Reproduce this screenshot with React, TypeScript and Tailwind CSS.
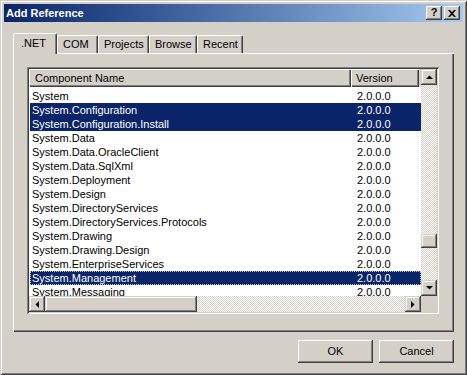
import React from "react";

const RAISED =
  "shadow-[inset_-1px_-1px_#404040,inset_1px_1px_#ffffff,inset_-2px_-2px_#808080,inset_2px_2px_#d4d0c8]";
const SCROLL_BTN =
  "shadow-[inset_-1px_-1px_#404040,inset_1px_1px_#d4d0c8,inset_-2px_-2px_#808080,inset_2px_2px_#ffffff]";
const HEADER_CELL =
  "shadow-[inset_1px_1px_#ffffff,inset_-1px_-1px_#404040,inset_-2px_-2px_#808080]";
const DITHER =
  "bg-[image:repeating-conic-gradient(#d4d0c8_0%_25%,#ffffff_0%_50%)] bg-size-[2px_2px]";

const ROWS: { name: string; selected?: boolean; focus?: boolean }[] = [
  { name: "System" },
  { name: "System.Configuration", selected: true },
  { name: "System.Configuration.Install", selected: true },
  { name: "System.Data" },
  { name: "System.Data.OracleClient" },
  { name: "System.Data.SqlXml" },
  { name: "System.Deployment" },
  { name: "System.Design" },
  { name: "System.DirectoryServices" },
  { name: "System.DirectoryServices.Protocols" },
  { name: "System.Drawing" },
  { name: "System.Drawing.Design" },
  { name: "System.EnterpriseServices" },
  { name: "System.Management", selected: true, focus: true },
  { name: "System.Messaging" },
];

const TABS = [
  { label: ".NET", width: "w-[44px]", active: true },
  { label: "COM", width: "w-[41px]" },
  { label: "Projects", width: "w-[51px]" },
  { label: "Browse", width: "w-[48px]" },
  { label: "Recent", width: "w-[46px]" },
];

function Arrow({ dir }: { dir: "up" | "down" | "left" | "right" }) {
  const points: Record<string, string> = {
    up: "0,4 7,4 3.5,0.5",
    down: "0,0 7,0 3.5,3.5",
    left: "4,0 4,7 0.5,3.5",
    right: "0,0 0,7 3.5,3.5",
  };
  const vertical = dir === "up" || dir === "down";
  return (
    <svg
      width={vertical ? 7 : 4}
      height={vertical ? 4 : 7}
      viewBox={vertical ? "0 0 7 4" : "0 0 4 7"}
    >
      <polygon points={points[dir]} fill="#000000" />
    </svg>
  );
}

function ScrollButton({ dir }: { dir: "up" | "down" | "left" | "right" }) {
  return (
    <div className={`w-[16px] h-[16px] shrink-0 bg-[#d4d0c8] flex items-center justify-center ${SCROLL_BTN}`}>
      <Arrow dir={dir} />
    </div>
  );
}

export default function App() {
  return (
    <div
      className={`w-[467px] h-[375px] bg-[#d4d0c8] p-[4px] flex flex-col font-['Liberation_Sans',Arial,sans-serif] text-[11px] text-black shadow-[inset_1px_1px_#d4d0c8,inset_-1px_-1px_#404040,inset_2px_2px_#ffffff,inset_-2px_-2px_#808080]`}
    >
      {/* Title bar */}
      <div className="h-[18px] shrink-0 flex items-center bg-linear-to-r from-[#0a246a] to-[#a6caf0] pl-[2px] pr-[3px]">
        <span className="text-white font-bold text-[11px] leading-none">Add Reference</span>
        <div className="ml-auto flex gap-[2px]">
          <div className={`w-[16px] h-[14px] bg-[#d4d0c8] flex items-center justify-center font-bold text-[11px] leading-none pb-[1px] ${RAISED}`}>
            ?
          </div>
          <div className={`w-[16px] h-[14px] bg-[#d4d0c8] flex items-center justify-center ${RAISED}`}>
            <svg width="8" height="7" viewBox="0 0 8 7">
              <path d="M0 0h2l2 2.2L6 0h2L5 3.5 8 7H6L4 4.8 2 7H0l3-3.5z" fill="#000000" />
            </svg>
          </div>
        </div>
      </div>

      {/* Body */}
      <div className="flex-1 flex flex-col pl-[9px] pt-[11px]">
        {/* Tabs */}
        <div className="relative z-10 -mb-px flex items-end h-[21px]">
          {TABS.map((t) =>
            t.active ? (
              <div
                key={t.label}
                className={`${t.width} h-[21px] bg-[#d4d0c8] border-l border-t border-white border-r border-r-[#404040] rounded-tl-[2px] rounded-tr-[2px] shadow-[inset_-1px_0_#808080] pl-[7px] pt-[3px] leading-[13px]`}
              >
                {t.label}
              </div>
            ) : (
              <div
                key={t.label}
                className={`${t.width} h-[18px] mb-px bg-[#d4d0c8] border-l border-t border-white border-r border-r-[#404040] rounded-tl-[2px] rounded-tr-[2px] shadow-[inset_-1px_0_#808080] pl-[5px] pt-[2px] leading-[13px]`}
              >
                {t.label}
              </div>
            )
          )}
        </div>

        {/* Tab panel */}
        <div className="w-[441px] h-[279px] pl-[14px] pt-[14px] shadow-[inset_1px_1px_#ffffff,inset_-1px_-1px_#404040,inset_-2px_-2px_#808080]">
          <div className="w-[412px] h-[247px] p-[2px] bg-white shadow-[inset_1px_1px_#808080,inset_-1px_-1px_#ffffff,inset_2px_2px_#404040,inset_-2px_-2px_#d4d0c8]">
            <div className="grid grid-cols-[392px_16px] grid-rows-[227px_16px]">
              {/* List content */}
              <div className="overflow-hidden flex flex-col bg-white">
                <div className="h-[18px] shrink-0 flex bg-[#d4d0c8]">
                  <div className={`w-[322px] h-full flex items-center pl-[6px] ${HEADER_CELL}`}>Component Name</div>
                  <div className={`w-[68px] h-full flex items-center pl-[5px] ${HEADER_CELL}`}>Version</div>
                  <div className="flex-1" />
                </div>
                <div className="pt-[2px] pl-px">
                  {ROWS.map((r) => (
                    <div
                      key={r.name}
                      className={`h-[14px] flex leading-[14px] whitespace-nowrap ${
                        r.selected ? "bg-[#0a246a] text-white" : ""
                      } ${r.focus ? "outline-1 outline-dotted -outline-offset-1 outline-[#c8c4bc]" : ""}`}
                    >
                      <div className="w-[321px] pl-[2px]">{r.name}</div>
                      <div className="pl-[6px]">2.0.0.0</div>
                    </div>
                  ))}
                </div>
              </div>

              {/* Vertical scrollbar */}
              <div className={`flex flex-col ${DITHER}`}>
                <ScrollButton dir="up" />
                <div className="flex-1">
                  <div className={`mt-[149px] w-[16px] h-[14px] bg-[#d4d0c8] ${SCROLL_BTN}`} />
                </div>
                <ScrollButton dir="down" />
              </div>

              {/* Horizontal scrollbar */}
              <div className={`flex ${DITHER}`}>
                <ScrollButton dir="left" />
                <div className={`w-[152px] h-[16px] bg-[#d4d0c8] ${SCROLL_BTN}`} />
                <div className="flex-1" />
                <ScrollButton dir="right" />
              </div>

              {/* Corner */}
              <div className="bg-[#d4d0c8]" />
            </div>
          </div>
        </div>

        {/* Buttons */}
        <div className="w-[441px] mt-[8px] flex justify-end gap-[6px]">
          <button className={`w-[75px] h-[23px] bg-[#d4d0c8] flex items-center justify-center ${RAISED}`}>OK</button>
          <button className={`w-[75px] h-[23px] bg-[#d4d0c8] flex items-center justify-center ${RAISED}`}>Cancel</button>
        </div>
      </div>
    </div>
  );
}
